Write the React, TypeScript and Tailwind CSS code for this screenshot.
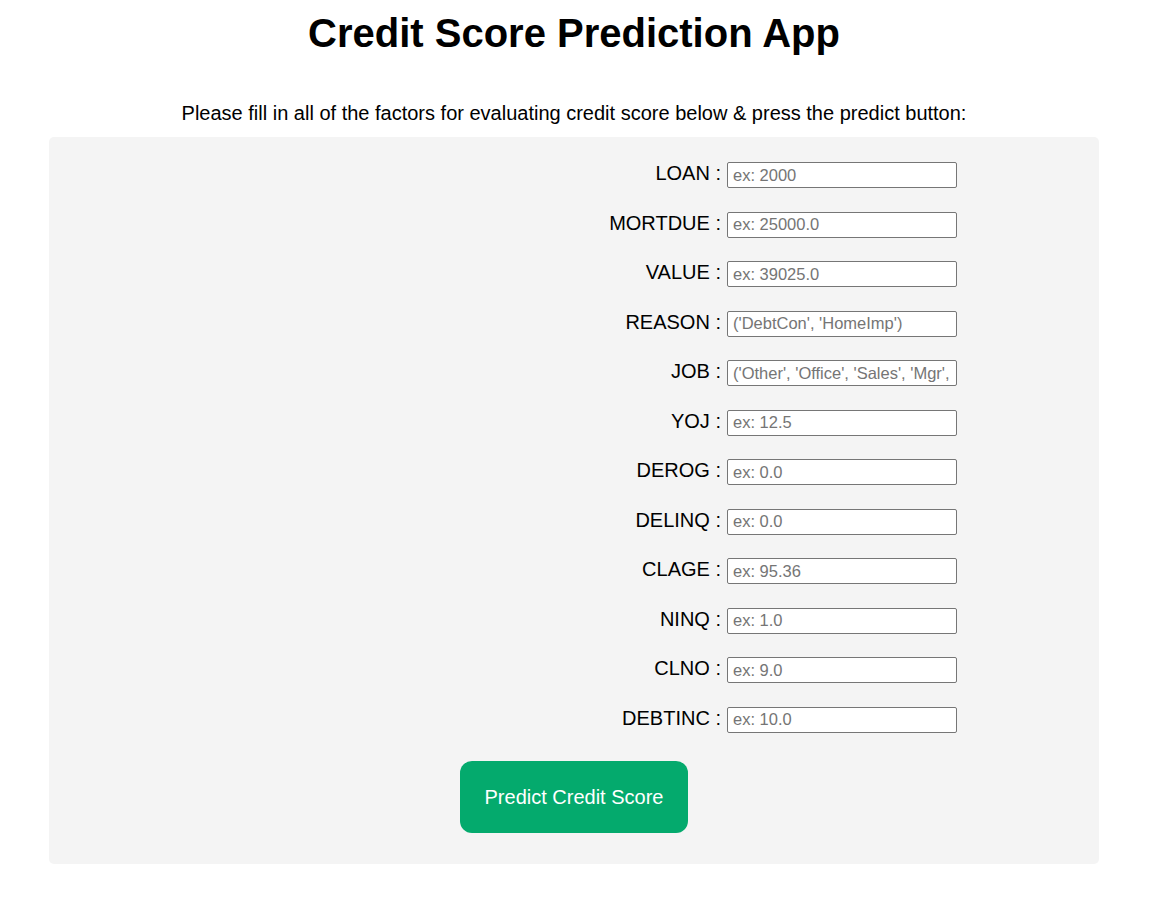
import React from "react";

const fields: { name: string; hint: string }[] = [
  { name: "LOAN", hint: "ex: 2000" },
  { name: "MORTDUE", hint: "ex: 25000.0" },
  { name: "VALUE", hint: "ex: 39025.0" },
  { name: "REASON", hint: "('DebtCon', 'HomeImp')" },
  { name: "JOB", hint: "('Other', 'Office', 'Sales', 'Mgr', 'ProfExe', 'Self')" },
  { name: "YOJ", hint: "ex: 12.5" },
  { name: "DEROG", hint: "ex: 0.0" },
  { name: "DELINQ", hint: "ex: 0.0" },
  { name: "CLAGE", hint: "ex: 95.36" },
  { name: "NINQ", hint: "ex: 1.0" },
  { name: "CLNO", hint: "ex: 9.0" },
  { name: "DEBTINC", hint: "ex: 10.0" },
];

export default function App() {
  return (
    <div className="min-h-screen bg-white text-black font-['Liberation_Sans',Arial,sans-serif]">
      <div className="w-[1148px] flex flex-col items-center">
        {/* Heading */}
        <h1 className="mt-[10px] text-[40px] leading-[46px] font-bold">Credit Score Prediction App</h1>
        <p className="mt-[46px] text-[20px] leading-[23px]">
          Please fill in all of the factors for evaluating credit score below &amp; press the predict button:
        </p>

        {/* Form panel */}
        <form
          className="mt-[12px] w-[1050px] bg-[#f4f4f4] rounded-[5px] pt-[25px] pb-[31px] flex flex-col items-center"
          onSubmit={(e) => e.preventDefault()}
        >
          <div className="grid grid-cols-[672px_230px] gap-x-[6px] gap-y-[23.5px] self-start">
            {fields.map((f) => (
              <React.Fragment key={f.name}>
                <label htmlFor={f.name} className="text-right text-[20px] leading-[22px]">
                  {f.name} :
                </label>
                <input
                  id={f.name}
                  name={f.name}
                  type="text"
                  placeholder={f.hint}
                  className="h-[26px] w-[230px] bg-white border border-[#767676] rounded-[2px] pl-[5px] pr-[6px] text-[16.5px] placeholder:text-[#757575] outline-none"
                />
              </React.Fragment>
            ))}
          </div>

          <button
            type="submit"
            className="mt-[28px] w-[228px] h-[72px] rounded-[12px] bg-[#04aa6d] text-white text-[20px]"
          >
            Predict Credit Score
          </button>
        </form>
      </div>
    </div>
  );
}
